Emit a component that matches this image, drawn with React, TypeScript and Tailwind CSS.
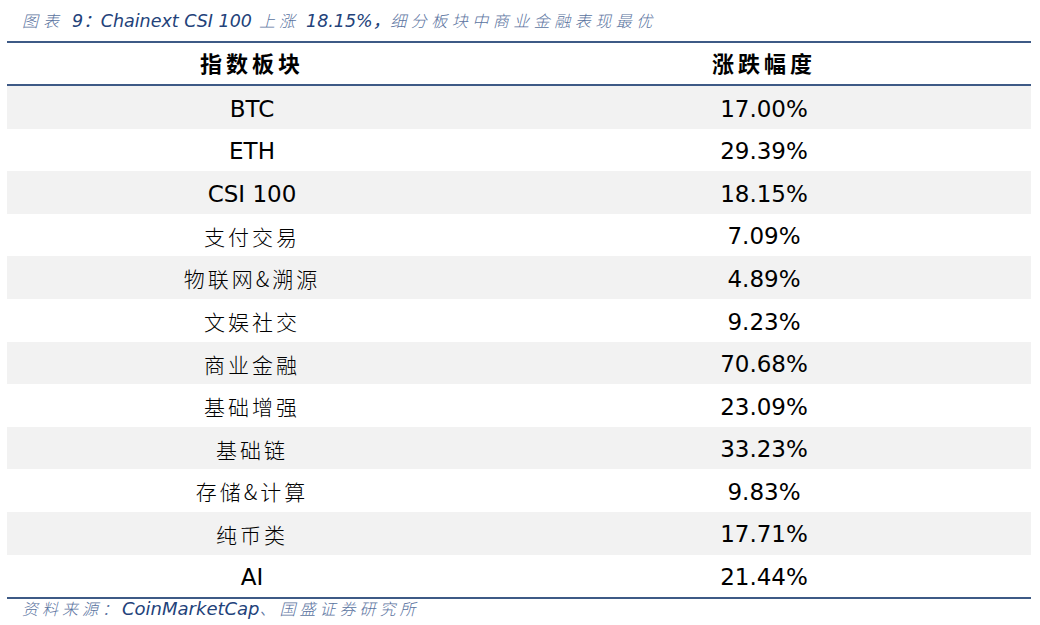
import React from "react";

const rows: [string, string][] = [
  ["BTC", "17.00%"],
  ["ETH", "29.39%"],
  ["CSI 100", "18.15%"],
  ["支付交易", "7.09%"],
  ["物联网&溯源", "4.89%"],
  ["文娱社交", "9.23%"],
  ["商业金融", "70.68%"],
  ["基础增强", "23.09%"],
  ["基础链", "33.23%"],
  ["存储&计算", "9.83%"],
  ["纯币类", "17.71%"],
  ["AI", "21.44%"],
];

const latin = /^[A-Za-z0-9 .%]+$/;

export default function App() {
  return (
    <div className="w-[1040px] h-[625px] bg-white flex flex-col font-['DejaVu_Sans','Noto_Sans_CJK_SC',sans-serif] text-black">
      <div className="h-[41px] pl-[22px] pt-[8px] italic text-[17.5px] leading-[24px] whitespace-nowrap">
        <span className="text-[#5a73a0] font-['Noto_Sans_CJK_SC',sans-serif] font-light text-[16px] tracking-[5px]">图表</span>
        <span className="text-[#23427a] ml-[8px]">9</span>
        <span className="text-[#23427a] font-['Noto_Sans_CJK_SC',sans-serif]">：</span>
        <span className="text-[#23427a]">Chainext CSI 100</span>
        <span className="text-[#5a73a0] font-['Noto_Sans_CJK_SC',sans-serif] font-light text-[16px] tracking-[4px] ml-[7px]">上涨</span>
        <span className="text-[#23427a] ml-[7px]">18.15%</span>
        <span className="text-[#23427a] font-['Noto_Sans_CJK_SC',sans-serif]">，</span>
        <span className="text-[#5a73a0] font-['Noto_Sans_CJK_SC',sans-serif] font-light text-[16px] tracking-[4.5px]">细分板块中商业金融表现最优</span>
      </div>
      <div className="ml-[7px] w-[1024px] border-t-2 border-b-2 border-[#3e5a86]">
        <div className="h-[43px] flex border-b-2 border-[#3e5a86] font-['Noto_Sans_CJK_SC',sans-serif] font-bold text-[22px] tracking-[4px]">
          <div className="w-[490px] flex items-center justify-center pb-[2px]">指数板块</div>
          <div className="flex-1 flex items-center justify-center pb-[2px]">涨跌幅度</div>
        </div>
        {rows.map(([name, val], i) => (
          <div
            key={name}
            className={
              "h-[42.6px] flex pt-[3px] " + (i % 2 === 0 ? "bg-[#f2f2f2]" : "bg-white")
            }
          >
            <div
              className={
                "w-[490px] flex items-center justify-center " +
                (latin.test(name)
                  ? "text-[23px]"
                  : "text-[21px] tracking-[3px] font-['Noto_Sans_CJK_SC',sans-serif] font-light")
              }
            >
              {name}
            </div>
            <div className="flex-1 flex items-center justify-center text-[23px]">
              {val}
            </div>
          </div>
        ))}
      </div>
      <div className="pl-[22px] -mt-[2px] italic text-[18px] leading-[22px] whitespace-nowrap">
        <span className="text-[#5a73a0] font-['Noto_Sans_CJK_SC',sans-serif] font-light text-[16px] tracking-[4px]">资料来源：</span>
        <span className="text-[#23427a]">CoinMarketCap</span>
        <span className="text-[#5a73a0] font-['Noto_Sans_CJK_SC',sans-serif] font-light text-[16px] tracking-[4px]">、国盛证券研究所</span>
      </div>
    </div>
  );
}
